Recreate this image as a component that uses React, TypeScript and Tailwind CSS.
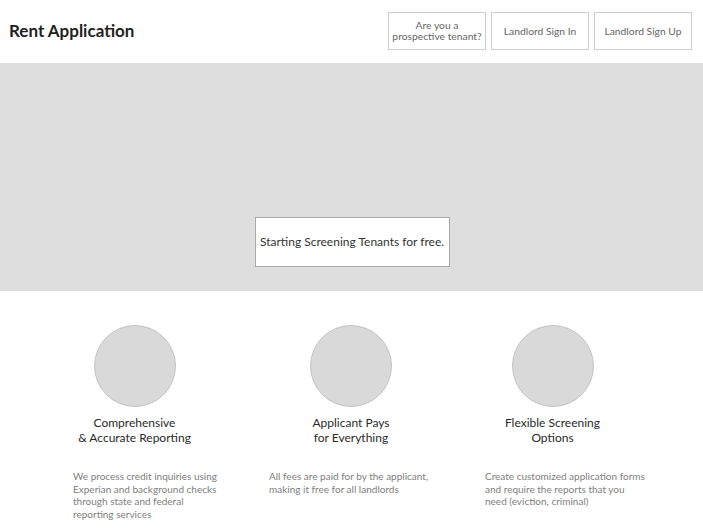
import React from "react";

const features = [
  {
    title: ["Comprehensive", "& Accurate Reporting"],
    desc: ["We process credit inquiries using", "Experian and background checks", "through state and federal", "reporting services"],
    colW: "w-[196px]",
    headW: "w-[123px]",
  },
  {
    title: ["Applicant Pays", "for Everything"],
    desc: ["All fees are paid for by the applicant,", "making it free for all landlords"],
    colW: "w-[216px]",
    headW: "w-[164px]",
  },
  {
    title: ["Flexible Screening", "Options"],
    desc: ["Create customized application forms", "and require the reports that you", "need (eviction, criminal)"],
    colW: "w-[200px]",
    headW: "w-[135px]",
  },
];

const NavButton = ({ children }: { children: React.ReactNode }) => (
  <button className="w-[98px] h-[38px] border border-[#cfcfcf] bg-white text-[10.3px] leading-[11px] text-[#666] flex items-center justify-center text-center">
    {children}
  </button>
);

export default function App() {
  return (
    <div className="w-[703px] h-[531px] bg-white overflow-hidden font-['Lato','Liberation_Sans',sans-serif] text-[#222]">
      <header className="h-[63px] flex items-center justify-between pl-[9px] pr-[11px]">
        <h1 className="text-[17px] font-bold text-[#222] -mt-[1px]">Rent Application</h1>
        <nav className="flex gap-[5px] -mt-[1px]">
          <NavButton>
            Are you a<br />prospective tenant?
          </NavButton>
          <NavButton>Landlord Sign In</NavButton>
          <NavButton>Landlord Sign Up</NavButton>
        </nav>
      </header>

      <section className="h-[228px] bg-[#dedede] flex justify-center pt-[154px]">
        <div className="w-[195px] h-[50px] ml-[1px] bg-white border border-[#a9a9a9] flex items-center justify-center text-[12px] text-[#333]">
          Starting Screening Tenants for free.
        </div>
      </section>

      <section className="flex pl-[73px] pt-[34px]">
        {features.map((f) => (
          <div key={f.title[0]} className={f.colW}>
            <div className={`${f.headW} flex flex-col items-center`}>
              <div className="w-[82px] h-[82px] rounded-full bg-[#d9d9d9] border border-[#c4c4c4]" />
              <div className="mt-[8px] text-[12px] leading-[15px] text-[#2a2a2a] text-center whitespace-nowrap">
                {f.title[0]}
                <br />
                {f.title[1]}
              </div>
            </div>
            <p className="mt-[25px] text-[10px] leading-[12.5px] text-[#808080] whitespace-nowrap">
              {f.desc.map((line, i) => (
                <React.Fragment key={i}>
                  {line}
                  {i < f.desc.length - 1 && <br />}
                </React.Fragment>
              ))}
            </p>
          </div>
        ))}
      </section>
    </div>
  );
}
